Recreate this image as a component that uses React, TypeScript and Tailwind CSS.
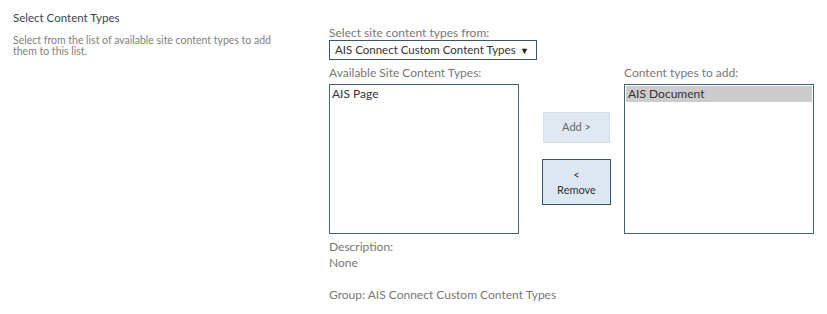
import React from "react";

const labelCls = "text-[12px] leading-[16px] text-[#777777] whitespace-nowrap";

export default function App() {
	return (
		<div className="flex w-[827px] h-[314px] bg-white font-['Lato',sans-serif] overflow-hidden">
			<div className="w-[329px] shrink-0 pl-[13px] pt-[9px]">
				<h2 className="text-[11.5px] leading-[18px] text-[#3b4650]">Select Content Types</h2>
				<p className="mt-[8px] w-[270px] text-[10.5px] leading-[11px] text-[#808080]">
					Select from the list of available site content types to add them to this list.
				</p>
			</div>
			<div className="pt-[25px]">
				<div className={labelCls}>Select site content types from:</div>
				<div className="mt-[-1px] flex h-[20px] w-[208px] items-center justify-between border border-[#3c5566] pl-[5px] pr-[7px]">
					<span className="whitespace-nowrap text-[11.5px] leading-none text-[#333333]">AIS Connect Custom Content Types</span>
					<span className="text-[9px] leading-none text-[#222222]">▼</span>
				</div>
				<div className="mt-[5px] flex">
					<div className="flex w-[190px] flex-col">
						<div className={labelCls}>Available Site Content Types:</div>
						<div className="mt-[3px] h-[150px] w-[190px] border border-[#4a6170] bg-white pl-[2px] pt-[1px] text-[12px] leading-[16px] text-[#333333]">
							AIS Page
						</div>
						<div className={`${labelCls} mt-[5px]`}>Description:</div>
						<div className={labelCls}>None</div>
						<div className={`${labelCls} mt-[16px]`}>Group: AIS Connect Custom Content Types</div>
					</div>
					<div className="ml-[23px] flex w-[69px] flex-col items-center pt-[47px]">
						<button className="h-[31px] w-[67px] border border-[#d5dfe8] bg-[#e0e9f2] text-[11px] text-[#666666]">
							Add &gt;
						</button>
						<button className="mt-[16px] flex h-[46px] w-[69px] flex-col items-center justify-center border border-[#3b5669] bg-[#dde7f1] text-[11px] leading-[15px] text-[#333333]">
							<span>&lt;</span>
							<span>Remove</span>
						</button>
					</div>
					<div className="ml-[13px] flex w-[190px] flex-col">
						<div className={labelCls}>Content types to add:</div>
						<div className="mt-[3px] h-[150px] w-[190px] border border-[#4a6170] bg-white p-px text-[12px] leading-[16px] text-[#333333]">
							<div className="bg-[#cccccc] pl-[2px]">AIS Document</div>
						</div>
					</div>
				</div>
			</div>
		</div>
	);
}
